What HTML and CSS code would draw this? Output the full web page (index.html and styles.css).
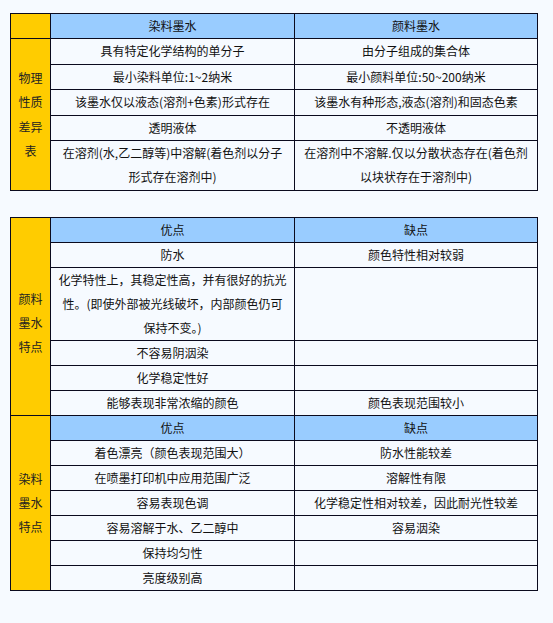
FILE: index.html
```html
<!DOCTYPE html>
<html lang="zh-CN">
<head>
<meta charset="utf-8">
<title>墨水比较</title>
<link rel="stylesheet" href="styles.css">
</head>
<body>
<div class="page">
  <table class="grid first">
    <colgroup><col class="c1"><col class="c2"><col class="c3"></colgroup>
    <tr class="head"><td class="side"></td><td>染料墨水</td><td>颜料墨水</td></tr>
    <tr><td class="side" rowspan="5">物理<br>性质<br>差异<br>表</td><td>具有特定化学结构的单分子</td><td>由分子组成的集合体</td></tr>
    <tr><td>最小染料单位:1~2纳米</td><td>最小颜料单位:50~200纳米</td></tr>
    <tr><td>该墨水仅以液态(溶剂+色素)形式存在</td><td>该墨水有种形态,液态(溶剂)和固态色素</td></tr>
    <tr><td>透明液体</td><td>不透明液体</td></tr>
    <tr><td>在溶剂(水,乙二醇等)中溶解(着色剂以分子<br>形式存在溶剂中)</td><td>在溶剂中不溶解.仅以分散状态存在(着色剂<br>以块状存在于溶剂中)</td></tr>
  </table>

  <table class="grid second">
    <colgroup><col class="c1"><col class="c2"><col class="c3"></colgroup>
    <tr class="head"><td class="side low" rowspan="6">颜料<br>墨水<br>特点</td><td>优点</td><td>缺点</td></tr>
    <tr><td>防水</td><td>颜色特性相对较弱</td></tr>
    <tr><td>化学特性上，其稳定性高，并有很好的抗光<br>性。(即使外部被光线破坏，内部颜色仍可<br>保持不变。)</td><td></td></tr>
    <tr><td>不容易阴洇染</td><td></td></tr>
    <tr><td>化学稳定性好</td><td></td></tr>
    <tr><td>能够表现非常浓缩的颜色</td><td>颜色表现范围较小</td></tr>
    <tr class="head"><td class="side" rowspan="7">染料<br>墨水<br>特点</td><td>优点</td><td>缺点</td></tr>
    <tr><td>着色漂亮（颜色表现范围大）</td><td>防水性能较差</td></tr>
    <tr><td>在喷墨打印机中应用范围广泛</td><td>溶解性有限</td></tr>
    <tr><td>容易表现色调</td><td>化学稳定性相对较差，因此耐光性较差</td></tr>
    <tr><td>容易溶解于水、乙二醇中</td><td>容易洇染</td></tr>
    <tr><td>保持均匀性</td><td></td></tr>
    <tr><td>亮度级别高</td><td></td></tr>
  </table>
</div>
</body>
</html>
```

FILE: styles.css
```css
html, body {
  margin: 0;
  padding: 0;
  background: #f6faff;
}
.page {
  padding: 13px 0 0 10px;
  font-family: "Noto Sans CJK SC", "Noto Sans", sans-serif;
  font-size: 12px;
  color: #111;
}
.grid {
  border-collapse: collapse;
  table-layout: fixed;
  width: 527px;
}
.grid .c1 { width: 40px; }
.grid .c2 { width: 244px; }
.grid .c3 { width: 243px; }
.grid td {
  border: 1px solid #0a0a1e;
  padding: 0;
  height: 24px;
  line-height: 24px;
  text-align: center;
  vertical-align: middle;
}
.first td {
  line-height: 24.4px;
}
.grid .head td {
  background: #99ccff;
}
.grid td.side {
  background: #ffcc00;
  color: #222;
}
.grid td.side.low {
  padding-top: 14px;
}
.second {
  margin-top: 26px;
}
```
